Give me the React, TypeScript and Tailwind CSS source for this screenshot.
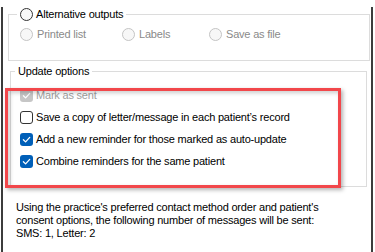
function Radio({ disabled = false }: { disabled?: boolean }) {
  return (
    <span
      className={`inline-block shrink-0 w-[13px] h-[13px] rounded-full border ${
        disabled ? "border-[#c4c4c4] bg-[#f7f7f7]" : "border-[#333333] bg-[#f9f9f9]"
      }`}
    />
  );
}

function Check({ state }: { state: "on" | "off" | "disabled" }) {
  if (state === "off") {
    return <span className="inline-block shrink-0 w-[13px] h-[13px] rounded-[3px] border border-[#333333] bg-white" />;
  }
  return (
    <span
      className={`inline-flex shrink-0 items-center justify-center w-[13px] h-[13px] rounded-[3px] ${
        state === "on" ? "bg-[#005fb8]" : "bg-[#c6c6c6]"
      }`}
    >
      <svg width="11" height="11" viewBox="0 0 12 12" fill="none">
        <path d="M2.6 6.3L5 8.6L9.5 3.7" stroke="white" strokeWidth="1.4" strokeLinecap="round" strokeLinejoin="round" />
      </svg>
    </span>
  );
}

export default function App() {
  const options: { label: string; state: "on" | "off" | "disabled" }[] = [
    { label: "Mark as sent", state: "disabled" },
    { label: "Save a copy of letter/message in each patient\u2019s record", state: "off" },
    { label: "Add a new reminder for those marked as auto-update", state: "on" },
    { label: "Combine reminders for the same patient", state: "on" },
  ];

  return (
    <div className="w-[375px] h-[252px] bg-white overflow-hidden font-['Liberation_Sans',Arial,sans-serif] text-[11px] leading-[14px] tracking-[-0.2px] text-black">
      <div className="relative ml-[1px] w-[372px] h-[251px] border-x-2 border-b-2 border-[#3c3c3c]">
        {/* Alternative outputs */}
        <fieldset className="mt-[7px] ml-[5px] mr-[1px] px-[8px] pb-[19px] border border-[#dcdcdc]">
          <legend className="px-[3px]">
            <label className="flex items-center h-[14px] gap-[3px]">
              <Radio />
              <span>Alternative outputs</span>
            </label>
          </legend>
          <div className="mt-[6px] pl-[3px] grid grid-cols-[102px_87px_1fr] h-[14px] items-center text-[#8a8a8a]">
            <label className="flex items-center gap-[4px]">
              <Radio disabled />
              <span>Printed list</span>
            </label>
            <label className="flex items-center gap-[4px]">
              <Radio disabled />
              <span>Labels</span>
            </label>
            <label className="flex items-center gap-[4px]">
              <Radio disabled />
              <span>Save as file</span>
            </label>
          </div>
        </fieldset>

        {/* Update options */}
        <fieldset className="mt-[3px] ml-[7px] mr-[4px] px-[4px] pb-[14px] border border-[#dcdcdc]">
          <legend className="px-[3px] h-[14px]">Update options</legend>
          <div className="pt-[6px] pl-[5px] flex flex-col">
            {options.map((o) => (
              <label key={o.label} className="flex items-center h-[22px] gap-[3px]">
                <Check state={o.state} />
                <span className={o.state === "disabled" ? "text-[#a0a0a0]" : ""}>{o.label}</span>
              </label>
            ))}
          </div>
        </fieldset>

        <p className="mt-[14px] ml-[13px] leading-[13px]">
          Using the practice&apos;s preferred contact method order and patient&apos;s
          <br />
          consent options, the following number of messages will be sent:
          <br />
          SMS: 1, Letter: 2
        </p>

        {/* Highlight annotation */}
        <div className="absolute left-[2px] top-[81px] w-[336px] h-[100px] border-[3px] border-[#f2474b] shadow-[2px_2px_4px_rgba(0,0,0,0.3),inset_2px_2px_4px_rgba(0,0,0,0.2)] pointer-events-none" />
      </div>
    </div>
  );
}
